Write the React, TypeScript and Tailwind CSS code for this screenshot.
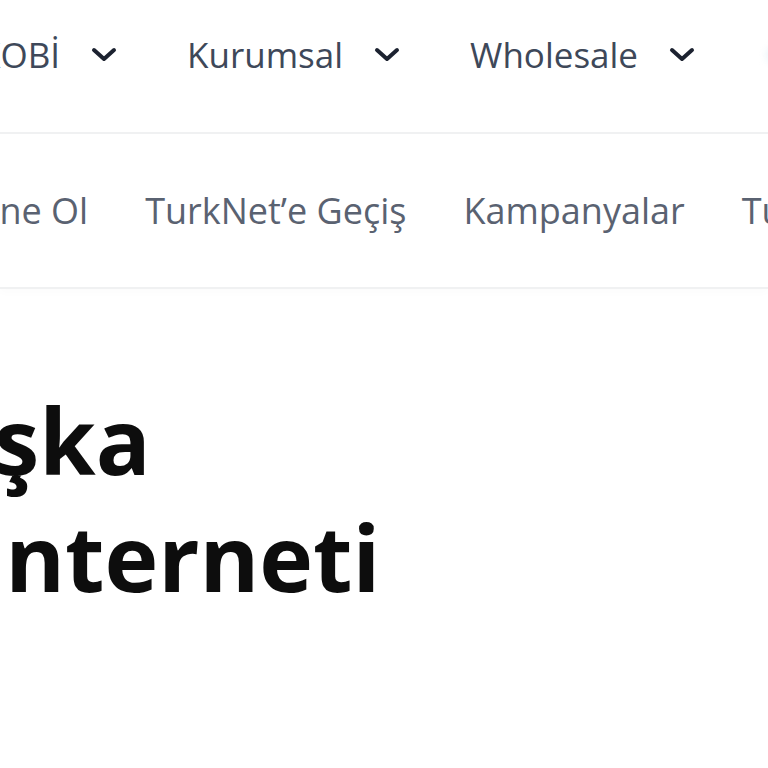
import React from "react";

/* ─── Nav data ─────────────────────────────────────────────────────── */

const TOP_MENU = ["KOBİ", "Kurumsal", "Wholesale"];

const SUB_MENU = ["Abone Ol", "TurkNet’e Geçiş", "Kampanyalar", "TurkNet Dünyası"];

/* ─── Chevron ──────────────────────────────────────────────────────── */

function Chevron() {
  return (
    <svg width="28" height="18" viewBox="0 0 28 18" fill="none" className="shrink-0">
      <polyline
        points="4,4 14,13 24,4"
        stroke="#1c2230"
        strokeWidth="4"
        strokeLinecap="round"
        strokeLinejoin="round"
      />
    </svg>
  );
}

/* ─── Page ─────────────────────────────────────────────────────────── */

export default function App() {
  return (
    <div
      className="h-[768px] w-[768px] overflow-hidden bg-white"
      style={{ fontFamily: '"Open Sans", "Noto Sans", sans-serif' }}
    >
      {/* top menu */}
      <div className="border-b-2 border-[#f0f1f2] pb-[22px]">
        <nav className="-ml-[21px] flex h-[110px] items-center gap-[69px] whitespace-nowrap">
          {TOP_MENU.map((item) => (
            <div key={item} className="flex items-center gap-[30px]">
              <span className="text-[35px] font-medium text-[#3e4859]">{item}</span>
              <Chevron />
            </div>
          ))}
          <div className="h-[20px] w-[30px] shrink-0 rounded-full bg-gradient-to-r from-[#eef8fc] to-[#fdeeee] blur-[3px]" />
        </nav>
      </div>

      {/* sub menu */}
      <div className="border-b-2 border-[#f0f1f2] shadow-[0_4px_8px_rgba(0,0,0,0.015)]">
        <nav className="-ml-[67px] flex h-[153px] items-center gap-[57px] whitespace-nowrap">
          {SUB_MENU.map((item) => (
            <span key={item} className="text-[36px] text-[#5a6271]">
              {item}
            </span>
          ))}
        </nav>
      </div>

      {/* hero heading */}
      <h1 className="mt-[93px] whitespace-nowrap text-[91px] font-bold leading-[117px] text-[#0d0d0d]">
        <span className="-ml-[122px] block">Başka</span>
        <span className="-ml-[25px] block">İnterneti</span>
      </h1>
    </div>
  );
}
